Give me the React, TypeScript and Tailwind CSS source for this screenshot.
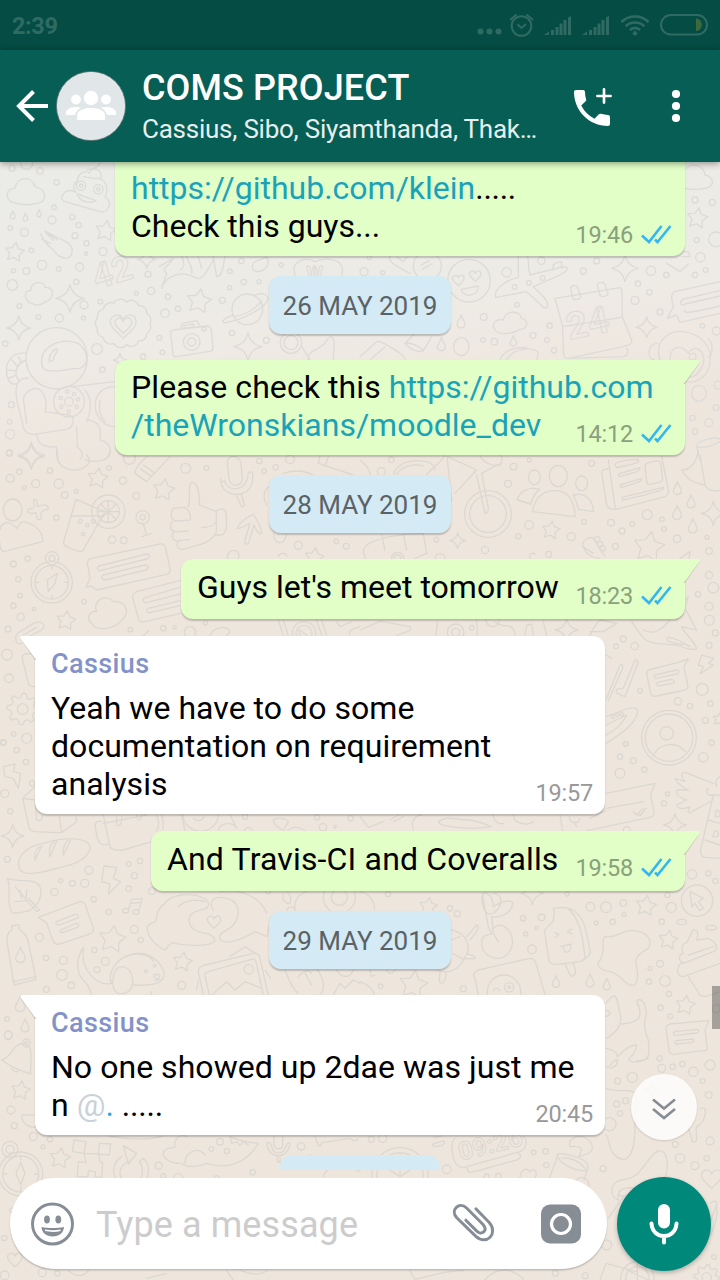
import React from "react";

type Pt = number[];
interface Sheet {
  x: number;
  y: number;
  circles?: Pt[];
  ellipses?: Pt[];
  stars?: Pt[];
  sparks?: Pt[];
  drops?: Pt[];
  hearts?: Pt[];
  gears?: Pt[];
  labels?: { t: string; x: number; y: number; size: number; rot: number }[];
  paths?: string[];
}

const starPath = (x: number, y: number, r: number) => {
  let d = "";
  for (let i = 0; i < 10; i++) {
    const a = -Math.PI / 2 + 0.15 + (i * Math.PI) / 5;
    const q = i % 2 ? r * 0.52 : r;
    d += `${i ? "L" : "M"}${(x + q * Math.cos(a)).toFixed(1)} ${(y + q * Math.sin(a)).toFixed(1)}`;
  }
  return d + "Z";
};
const sparkPath = (x: number, y: number, r: number) => {
  const k = r * 0.16;
  return `M${x} ${y - r}Q${x + k} ${y - k} ${x + r} ${y}Q${x + k} ${y + k} ${x} ${y + r}Q${x - k} ${y + k} ${x - r} ${y}Q${x - k} ${y - k} ${x} ${y - r}Z`;
};
const dropPath = (x: number, y: number, r: number) =>
  `M${x} ${y - r}C${x + r * 0.2} ${y - r * 0.4} ${x + r * 0.7} ${y} ${x + r * 0.6} ${y + r * 0.5}C${x + r * 0.4} ${y + r * 1.1} ${x - r * 0.5} ${y + r * 1.1} ${x - r * 0.6} ${y + r * 0.4}C${x - r * 0.6} ${y} ${x - r * 0.1} ${y - r * 0.4} ${x} ${y - r}Z`;
const heartPath = (x: number, y: number, r: number) =>
  `M${x} ${y + r}C${x - r * 0.5} ${y + r * 0.5} ${x - r * 1.2} ${y} ${x - r} ${y - r * 0.5}C${x - r * 0.7} ${y - r} ${x - r * 0.1} ${y - r * 0.9} ${x} ${y - r * 0.4}C${x + r * 0.2} ${y - r} ${x + r * 0.9} ${y - r} ${x + r} ${y - r * 0.4}C${x + r * 1.1} ${y + r * 0.1} ${x + r * 0.4} ${y + r * 0.6} ${x} ${y + r}Z`;
const scallop = (x: number, y: number, rx: number, ry: number, n: number) => {
  let d = "";
  for (let i = 0; i <= n; i++) {
    const a = (i * 2 * Math.PI) / n;
    const px = (x + rx * Math.cos(a)).toFixed(1);
    const py = (y + ry * Math.sin(a)).toFixed(1);
    d += i ? `A22 22 0 0 1 ${px} ${py}` : `M${px} ${py}`;
  }
  return d;
};
const gearPath = (x: number, y: number, r: number) => {
  let d = "";
  for (let i = 0; i < 32; i++) {
    const a = (i * Math.PI) / 16;
    const q = i % 4 < 2 ? r * 1.35 : r;
    d += `${i ? "L" : "M"}${(x + q * Math.cos(a)).toFixed(1)} ${(y + q * Math.sin(a)).toFixed(1)}`;
  }
  return d + "Z";
};

// Doodle sheets are drawn at three times their size on the page.
const SHEETS: Sheet[] = [
  {
    x: 0, y: 160,
    circles: [[36,25,9],[80,10,18],[120,33,10],[170,67,8],[162,142,7],[156,180,12],[217,171,8],[236,195,8],[31,204,7],[73,217,12],[225,227,9],[259,250,8],[258,281,5],[94,271,7],[309,275,12],[126,315,14],[40,332,6],[79,333,10],[176,327,7],[239,321,12],[229,366,8],[37,375,16],[58,438,7],[252,435,12],[301,425,7],[115,471,7],[178,474,12],[250,474,6],[16,551,8],[409,400,6],[444,343,9],[453,393,11],[504,410,8],[495,460,13],[534,446,8],[478,533,7],[487,577,7],[291,567,16],[307,629,8],[429,590,8],[667,421,9],[696,519,8],[799,541,9],[690,334,7],[724,303,8],[731,366,8],[689,383,6],[777,365,6],[844,315,6],[34,734,9],[29,785,7],[30,823,14],[28,878,9],[243,77,14],[295,88,14],[243,77,5],[295,88,5],[575,546,25],[575,546,12],[612,507,6],[742,448,46],[170,595,92],[207,725,46],[207,725,13],[202,695,5],[222,702,5],[234,718,5],[230,740,5],[206,755,5],[184,740,5],[182,714,5],[873,548,32],[873,548,21]],
    stars: [[44,277,30],[317,213,32],[597,424,38]],
    sparks: [[210,415,42],[56,504,36],[744,560,42],[94,885,40],[440,298,28],[360,600,20]],
    drops: [[38,165,12],[76,172,12],[117,160,11]],
    hearts: [[370,497,38],[370,495,25]],
    labels: [{ t: "42", x: 290, y: 388, size: 104, rot: -17 }, { t: "w", x: 918, y: 358, size: 70, rot: 0 }],
    paths: [
      "M40 128C15 120 15 85 45 85C50 50 95 45 105 80C140 85 145 128 110 130C90 136 60 134 40 128Z",
      "M232 62C200 90 250 105 215 92C190 88 175 120 195 125L300 155C335 160 335 115 315 112C325 90 320 60 300 58M232 62C235 35 260 30 268 40C280 15 300 30 303 45C310 55 300 60 250 50M262 28C280 30 300 20 302 0M232 102C240 130 275 130 288 122Z",
      "M122 222C135 240 120 235 160 270C180 300 215 305 217 270C215 250 190 240 170 232C150 222 130 208 135 215C150 235 160 235 160 242M125 237L150 250M145 222L172 240",
      "M95 430C70 420 70 390 92 392C92 365 130 360 135 382C165 380 165 420 135 425C125 438 105 438 95 430Z",
      scallop(370, 490, 80, 64, 13),
      "M512 520C510 515 515 512 520 510L620 498C628 498 632 500 634 508L639 565C638 572 635 573 630 574L530 590C522 592 520 588 519 582ZM540 508L548 490L590 482L600 498M551 497L580 492L582 500L553 505Z",
      "M700 465C660 480 660 495 690 485C740 475 820 430 800 408C795 400 780 400 765 405M700 470C740 465 775 440 785 422",
      "M125 610C120 560 180 530 235 550C265 575 270 610 240 625C200 625 190 635 160 632C135 635 125 625 125 610Z",
      "M148 605C145 585 160 565 172 568C175 580 160 580 160 600Z",
      "M85 655C40 650 45 700 55 740L70 800C75 825 100 825 120 820L200 808C225 800 225 765 205 765L135 755C145 720 130 685 105 685C80 690 65 710 72 730L80 790",
      "M75 580C35 575 15 610 20 640C22 665 35 675 50 672M55 590L65 610M35 600L52 618M22 630L45 632M25 655L48 645M78 600C50 610 40 640 55 660",
      "M110 820C110 850 130 865 170 860L175 900M230 800L232 860C250 875 250 890 240 900M265 780C295 785 305 800 300 840C340 850 340 890 310 900M215 680L345 665M255 690C280 720 270 760 260 785M345 680C310 680 285 700 285 740C290 780 320 800 345 800M300 720C295 750 300 770 315 785",
      "M478 320L520 295C500 330 480 320 500 340L485 385C495 350 540 330 580 350C610 370 620 330 640 300M540 330C560 320 550 300 545 290M575 340C580 320 565 310 560 290M605 325L595 290M640 290L650 350C665 350 670 320 675 290",
      "M760 330C745 300 790 300 800 290C810 310 800 335 770 335Z",
      "M885 345C870 300 920 290 945 305C975 290 1040 295 1025 345",
      "M905 560L930 600M990 530C1010 535 1000 560 1000 600M985 535C960 580 925 560 925 600",
    ],
  },
  {
    x: 360, y: 160,
    circles: [[1005,120,9],[1057,127,9],[1010,240,8],[1068,238,22],[1021,292,14],[1005,345,8],[1037,330,7],[919,345,8],[873,332,14],[710,303,9],[670,333,9],[544,302,11],[440,337,14],[834,371,8],[868,397,8],[825,421,12],[900,456,9],[464,381,7],[507,368,7],[548,354,7],[471,434,7],[371,471,10],[569,497,8],[519,526,9],[561,540,7],[582,571,8],[403,545,10],[369,540,7],[1027,497,7],[1069,513,12],[12,335,12],[68,338,6],[28,293,6],[998,774,8],[1046,788,12],[1005,815,8],[1068,743,9],[1075,675,12],[327,362,64],[202,318,42],[998,590,10]],
    ellipses: [[304,560,23,27],[1017,700,22,24]],
    stars: [[1012,175,32]],
    sparks: [[795,325,40],[860,502,32]],
    drops: [[303,485,20],[244,553,20],[460,543,16]],
    hearts: [[295,360,17],[346,347,17]],
    labels: [{ t: "24", x: 628, y: 540, size: 112, rot: -12 }],
    paths: [
      "M975 85C1000 90 1040 90 1055 75C1065 55 1040 45 1035 45C1030 10 990 10 980 25",
      "M303 388L355 378C355 410 310 415 303 388ZM183 315L208 302M186 328L215 312",
      "M90 290C85 300 90 310 150 340M110 290L130 305L140 292",
      "M475 290L475 352C440 360 400 385 407 412L500 395L552 443C570 445 562 425 555 415L520 380L600 345C635 325 625 315 590 325L510 345C500 310 510 290 500 290M580 330C575 310 590 305 605 305L605 325",
      "M585 415L780 383C790 385 785 400 787 470L815 540C820 555 800 555 790 560L625 595C612 597 610 585 610 570L608 500ZM608 500L785 472M625 595L790 590C805 585 807 575 800 565M608 500L585 415",
      "M632 385C630 377 650 374 652 380L662 410C664 418 640 422 638 414ZM712 377C710 368 730 364 734 372L744 400C746 410 722 412 720 405Z",
      "M1080 365L945 395C930 400 935 420 940 440L922 475L950 465L960 487L1080 460M968 418L1080 392M968 418C955 430 965 440 975 432L1080 408M975 450C970 460 980 462 1080 438M940 275L985 275L990 290L965 290M920 310L960 335L985 312",
      "M405 510C390 490 410 475 430 480C435 450 480 450 485 475C510 480 500 510 480 508C450 525 415 525 405 510Z",
      "M165 520L135 550C150 570 180 580 190 572L215 530M135 550C150 545 180 560 190 572M0 590L50 545C60 540 140 585 135 600M30 600L75 560",
      "M440 600C460 560 530 560 535 580L530 600M420 600C430 570 470 560 500 563",
      "M900 600C880 540 930 510 970 515C1020 520 1060 560 1050 610C1040 660 1000 670 980 665M893 550C860 550 860 600 885 600M1045 535C1065 560 1055 590 1045 590M930 600C930 560 960 550 985 580C1000 550 1040 570 1030 610C1020 640 1000 655 985 650",
      "M1010 860C1010 840 1080 825 1080 840M1010 860L1020 900M1010 860C1040 870 1070 850 1080 845",
    ],
  },
  {
    x: 0, y: 450,
    circles: [[31,85,12],[58,65,8],[28,10,9],[73,113,6],[107,101,12],[150,62,8],[176,101,14],[194,135,10],[229,124,6],[327,54,7],[369,92,11],[388,25,18],[409,138,10],[557,55,15],[619,54,7],[778,33,8],[792,64,7],[827,52,8],[870,28,13],[169,203,8],[336,269,11],[371,271,10],[40,342,9],[83,326,8],[55,388,8],[60,437,7],[40,467,8],[62,501,11],[102,477,5],[252,455,7],[24,537,9],[391,539,7],[490,535,8],[524,532,5],[21,614,16],[27,685,13],[616,518,6],[895,286,12],[1009,274,7],[1039,289,9],[700,318,17],[570,547,17],[41,852,7],[80,865,15],[10,877,8],[325,185,50],[325,185,33],[241,214,6],[281,214,6],[262,226,5],[249,252,5],[428,202,20],[428,202,8],[155,397,62],[155,397,50],[156,325,20],[156,325,9],[912,550,35],[912,550,24],[68,777,16]],
    ellipses: [[38,180,28,33]],
    stars: [[293,85,32],[491,120,34],[198,512,30],[943,323,30]],
    sparks: [[94,20,38]],
    gears: [[68,777,35]],
    paths: [
      "M0 240C5 215 25 215 35 222L50 235L65 215C110 220 130 250 128 275L10 305C0 300 0 290 0 280",
      "M100 150C105 145 112 148 112 170C135 160 145 165 145 178C125 182 118 185 125 205C115 213 110 210 108 188C85 195 80 185 85 178C105 175 105 170 100 150Z",
      "M228 148L315 185L250 300C245 307 235 306 200 290C190 285 190 280 192 270ZM215 198L305 198M325 152V218M292 185H358M302 162L348 208M348 162L302 208",
      "M430 222L440 255M425 260L455 250",
      "M565 170C575 140 560 110 575 97C595 95 600 140 598 165L650 185C650 180 672 170 677 185C682 220 680 250 665 255L645 255C620 285 590 285 550 298C530 300 525 280 540 270M650 185C645 210 655 240 645 255M520 175C510 190 510 210 530 213L570 210C575 195 565 180 555 172L520 175M517 215C505 235 515 245 530 245L565 243M520 248C510 265 525 275 540 272L570 268M605 233C630 232 645 225 648 215",
      "M682 40C680 10 720 15 723 40L727 85C727 110 692 115 687 85ZM662 85C658 95 670 100 674 90C680 130 740 125 744 75C742 65 760 60 758 75C765 150 665 150 662 90M710 137L722 165C725 172 735 170 732 162L725 132",
      "M712 235C720 210 750 200 758 193C775 210 785 240 785 250C775 255 765 235 762 225L745 280C735 285 733 280 735 270L750 220C735 225 720 240 712 235Z",
      "M142 390L172 370L165 400L145 425ZM155 350v8M155 436v8M108 397h8M194 397h8",
      "M275 325L480 282C490 280 495 285 497 295L510 355C512 365 508 370 500 373L290 420L275 408L258 412L270 385L262 340C262 330 268 327 275 325Z",
      "M297 348L440 312C452 312 450 325 440 327L300 362C290 360 290 350 297 348ZM310 375L435 345C447 345 447 357 437 360L315 390C303 388 303 378 310 375Z",
      "M540 392L410 425C398 430 395 440 400 450L415 505C418 515 425 518 435 515L540 490M540 412L435 443C425 448 430 460 440 458L540 432M540 452L445 475C438 480 440 490 450 488L540 467",
      "M275 520C255 505 270 480 290 485C275 450 320 430 340 455C375 450 390 485 370 505C345 540 290 545 275 520Z",
      "M75 565L125 540C140 525 125 510 105 518L60 545C40 555 45 590 65 580M70 555L110 532",
      "M510 20L440 95L405 70C405 60 410 45 440 20M420 55L455 80M430 45L465 70",
      "M170 0C165 50 200 60 230 60C260 55 280 35 260 15M255 30C300 40 330 30 330 0",
      "M105 610L75 612C68 615 65 620 68 630L85 700C90 710 95 710 105 710",
      "M835 510L850 557M850 510L865 557M950 510L965 557M965 510L980 557M897 540C897 560 910 570 925 562C920 550 912 555 905 543ZM630 557C640 530 680 525 690 545L680 557M1010 515L1020 530L1055 515M1050 555C1040 540 1065 535 1080 530",
      "M800 165C785 140 795 115 808 110M820 250C825 290 855 285 860 250M850 70C880 60 910 60 940 75M960 15L955 40L1060 75M985 20L975 48M835 320C840 305 860 310 860 318M430 557L445 542",
    ],
  },
  {
    x: 360, y: 450,
    circles: [[94,29,8],[64,65,12],[444,101,10],[461,50,10],[508,30,6],[695,40,9],[507,225,13],[475,259,8],[375,300,11],[634,260,12],[672,215,7],[753,218,10],[786,243,9],[817,222,7],[862,194,15],[906,208,7],[912,237,7],[951,266,11],[766,289,9],[566,313,9],[229,269,7],[1041,262,6],[1047,303,10],[1047,375,11],[1060,413,16],[1047,469,12],[1014,433,8],[1048,511,15],[1066,549,9],[1047,586,9],[790,567,9],[768,589,7],[824,588,11],[840,722,7],[1027,718,18],[954,754,11],[990,768,8],[1051,761,8],[1036,811,9],[1055,878,8],[797,881,7],[240,325,14],[384,192,70],[384,192,55],[113,325,18],[113,325,10],[712,268,8],[720,282,8],[728,295,8],[287,547,25],[287,547,12],[335,533,7],[398,510,20],[758,800,5],[772,795,5],[786,793,5],[927,863,82],[927,863,71],[920,850,20]],
    ellipses: [[523,82,18,22],[595,78,27,32],[665,100,18,22]],
    stars: [[573,241,28],[867,292,48],[1078,808,20]],
    sparks: [[1060,190,36],[293,272,24],[620,540,34]],
    drops: [[952,115,20],[993,155,20],[951,188,22],[998,228,22]],
    paths: [
      "M262 20L350 60L285 130M262 25L275 155M350 75L375 190C385 190 385 180 385 175L365 70L410 45C430 45 430 20 420 15M360 15C370 40 400 50 420 45M185 95C200 60 245 40 255 15M100 75C110 40 150 25 200 35C215 40 225 50 225 60M110 75C120 50 160 40 190 48M0 30C20 45 30 60 30 75",
      "M517 185C525 140 555 120 585 122C625 120 645 155 645 200ZM472 150C480 120 510 110 540 118C520 130 515 150 512 162ZM640 135C680 125 700 155 700 185L655 178C652 160 645 145 640 135Z",
      "M745 30L765 170C765 180 775 178 780 175L915 140C925 135 928 130 925 120L905 20M745 55L730 60C722 62 725 70 727 80L740 165C745 180 765 178 765 178M765 45C765 35 790 30 835 28C840 38 830 40 770 53ZM775 72L840 53C842 62 838 65 778 80ZM780 105L842 86C850 90 846 95 782 113ZM785 142L910 112C918 115 914 122 788 150ZM855 48C855 40 860 38 895 32C902 32 902 38 908 88C908 95 905 97 868 103C862 103 860 100 860 95Z",
      "M965 60C990 60 1010 40 1015 0M965 60C985 95 1010 100 1035 105L1020 15M1035 105C1045 125 1070 125 1080 120",
      "M668 290C665 265 695 260 700 265L735 320M670 290C680 320 710 325 720 325M668 290L700 310",
      "M15 325L10 300C15 280 60 255 190 250L200 310L165 325M65 255L75 300M130 252L140 300M510 325C505 315 520 305 525 312",
      "M228 557L232 515M348 510C352 515 352 557 352 557M405 515C430 540 460 510 465 557M495 557L500 525L515 522L520 557M550 515L560 557M690 557C700 530 720 510 720 510L770 520L730 545L690 545M0 540C50 520 60 510 70 515L150 530C160 545 130 545 110 557",
      "M815 515C860 580 850 580 950 585C960 590 1010 605 1010 595C1000 570 970 545 965 530L1010 540L975 475L985 440C970 460 950 465 960 490L950 510M970 585L925 575C910 555 940 560 990 590M850 540C880 555 900 545 930 510M960 325L990 305L985 335L965 380",
      "M738 750L780 645C785 640 790 645 788 655L745 752M825 630C835 628 835 640 830 648L795 740L770 730C765 715 780 715 790 715Z",
      "M865 660C858 665 860 675 862 680L872 730C875 740 880 740 890 738L975 720C985 715 985 710 983 705L972 650L985 627L955 637Z",
      "M885 675L950 660C960 662 958 670 950 672L888 685C880 682 880 678 885 675ZM892 697L935 688C945 690 945 698 937 700L895 708C888 705 888 700 892 697Z",
      "M1025 615L1062 625L1045 640L1060 645L1020 672L1030 650L1015 645Z",
      "M738 800L780 785C810 770 835 770 833 785C830 820 780 855 738 880M738 825L800 795C790 820 760 845 738 855M738 615L755 625",
      "M880 920C890 880 950 870 975 905",
    ],
  },
  {
    x: 0, y: 740,
    circles: [[10,8,8],[50,30,8],[78,66,8],[14,161,12],[31,214,8],[22,358,9],[267,391,12],[182,422,6],[217,430,9],[254,430,12],[163,456,11],[281,478,8],[326,516,8],[386,372,7],[420,363,8],[403,407,9],[386,446,8],[456,453,10],[118,592,12],[138,654,8],[190,661,12],[186,705,16],[139,748,9],[214,736,10],[283,630,8],[316,664,12],[291,689,9],[403,568,12],[422,600,8],[545,736,12],[735,230,8],[951,232,8],[969,262,11],[1005,260,4],[1052,235,8],[745,275,12],[805,455,7],[21,837,7],[25,885,12],[96,130,8],[602,220,54],[1018,472,48],[1018,472,24],[438,694,4],[464,677,4],[746,688,14]],
    ellipses: [[377,512,9,7],[408,516,9,7]],
    stars: [[337,598,42],[548,666,30]],
    sparks: [[38,288,34]],
    drops: [[61,645,24],[60,792,24],[75,857,20]],
    hearts: [[642,545,20],[471,710,9]],
    paths: [
      "M10 80L45 72L40 95L62 100L55 145L40 115L15 110ZM312 378L350 382L340 415L362 425L325 463L330 432L305 425Z",
      "M68 175L88 265C90 275 95 275 185 278L178 230M68 175L105 140M68 175L105 180M185 278L230 245L228 230M105 185L110 240C120 245 128 240 128 225",
      "M60 390C45 360 70 320 130 310C190 290 270 290 270 325C260 370 190 380 150 390C110 402 70 405 60 390M105 360C100 330 115 325 120 320M150 350C145 320 155 310 165 302M190 345C185 320 200 305 205 298M105 360L125 318M150 350L172 300M190 345L212 300",
      "M305 245C280 240 285 260 290 285C295 315 310 318 325 312M310 225L330 320C335 330 350 332 370 330L455 305M310 250L440 225M350 232V255C360 260 365 255 365 230M410 225C410 245 425 245 425 225M470 225C480 250 475 265 470 273M485 225C490 240 492 250 488 268",
      "M580 235C590 245 605 245 612 230M545 225L555 273M655 273C660 245 700 245 710 265L690 225M820 240C830 230 860 235 865 245C860 260 850 262 850 273M820 240C820 260 840 262 845 270M865 270C880 255 910 265 915 273",
      "M22 415C60 430 100 410 120 440C130 470 110 510 75 515C50 520 30 525 30 500C20 480 35 440 22 415ZM45 440L110 515L118 510L85 475M60 450L65 475M80 450L78 480M45 485L80 482",
      "M115 532L240 485C250 483 255 490 258 500L280 565C282 575 275 580 270 582L175 613C165 613 160 608 158 600L140 548ZM170 545L225 523C238 522 238 532 230 535L178 555C168 555 165 548 170 545ZM182 570L228 550C240 550 238 560 230 563L188 578C180 578 178 572 182 570Z",
      "M385 510L395 478L427 475L415 515M392 490L423 487",
      "M495 490C520 450 620 460 625 490C630 520 570 500 567 540C570 590 640 570 645 600C640 620 560 620 515 608L495 630C470 620 440 590 442 560C450 545 470 550 468 540C470 520 480 500 495 490M640 510C620 480 650 470 670 473C720 480 725 520 700 555C685 575 660 570 658 595C665 610 700 615 765 575L800 590C810 570 800 560 810 555M660 455C720 445 780 470 800 520M535 500C560 475 600 480 615 485",
      "M885 510C880 480 900 460 920 455M850 460C845 480 860 495 870 490C875 475 870 460 862 458M860 510C870 495 880 500 885 512",
      "M35 570L35 558L57 554L58 570C80 580 85 600 88 620L108 718L42 735L22 610C18 590 25 575 35 570ZM42 725L108 710",
      "M250 622C225 660 230 700 250 720C270 740 270 750 275 765M250 622C240 690 290 740 335 730M335 730C320 700 350 655 390 645C430 630 470 650 490 690C500 720 480 740 400 735M360 680C335 690 330 750 355 760C380 765 395 750 398 730C398 700 390 680 360 680M400 643C430 640 455 650 460 665M452 755L455 765M462 722L480 718",
      "M610 765L595 695C595 680 605 678 615 675L760 640C772 638 778 645 780 655L805 765M628 765L615 708C613 700 618 697 625 695L755 658C765 656 767 660 768 665L790 765M635 765L680 725L705 750L735 725L785 745M690 650L735 620L765 640M595 720L590 750M795 690L812 715",
      "M855 690C870 730 880 750 895 760M950 685C975 720 975 750 960 765M895 710C910 690 930 690 935 700M915 700L935 735M1000 765L1020 730L1035 745L1060 720L1080 730M1010 690C1020 710 1050 720 1060 690",
    ],
  },
  {
    x: 360, y: 740,
    circles: [[797,12,7],[780,50,8],[820,62,9],[853,89,8],[780,100,15],[922,162,6],[912,190,8],[1030,52,14],[996,403,14],[1045,400,8],[1066,423,8],[922,465,8],[934,502,15],[905,545,8],[790,489,10],[738,502,16],[691,500,13],[792,523,6],[758,545,8],[709,549,6],[621,462,6],[545,532,10],[530,564,5],[489,535,8],[497,582,6],[516,628,13],[270,505,8],[292,521,9],[84,462,8],[900,671,10],[870,685,6],[867,725,8],[915,723,16],[927,762,8],[902,803,8],[931,829,7],[310,746,9],[62,739,7],[800,270,10],[1069,806,12],[1011,482,47],[432,755,50],[447,742,14],[447,742,4],[740,820,9]],
    ellipses: [[965,546,14,8],[1053,563,16,7]],
    stars: [[858,498,32],[925,600,30],[976,796,30],[205,500,28],[160,735,44]],
    sparks: [[945,255,34],[517,460,34]],
    drops: [[588,725,18],[690,722,20],[740,733,18]],
    paths: [
      "M738 160L885 130L872 165L882 215C882 225 880 230 870 232L680 272M738 205L850 185M690 235L738 212M600 225L608 273M820 215L830 225L850 205M835 222L840 228L858 205M628 230C630 255 660 250 660 235M645 248L650 260",
      "M1060 130L975 97C960 100 965 110 975 125L945 115C950 130 980 150 985 150L950 150C945 160 960 175 980 180L950 195C950 205 970 210 990 200C980 215 985 220 990 218L1060 180M1080 110C1060 120 1070 135 1070 140M1045 145C1035 155 1045 170 1055 165L1080 165M1060 165L1022 330C1020 345 1025 350 1035 352L1080 355M1045 240L1080 250M1035 300L1080 315M1070 210C1085 215 1085 235 1065 230ZM1065 272C1080 277 1080 293 1058 290Z",
      "M0 230L25 262L70 245M90 240L115 225M100 245L130 230M235 245C260 225 290 240 330 240C360 245 380 255 395 260L340 265C300 265 240 260 235 245M400 225C400 245 420 255 430 250M460 225C460 250 500 260 520 245M160 270C150 240 170 225 185 225",
      "M990 455L1030 475L1015 485L1030 505L1018 512L1005 490L995 500Z",
      "M385 560C375 500 370 490 368 460C395 455 400 490 400 500M368 460C360 500 380 530 395 520M400 460C430 460 430 500 400 520M400 500C430 480 460 480 458 490C455 520 420 535 395 530M395 530L400 580L415 605M385 560C400 595 400 575 370 590C355 620 375 655 415 655C460 650 470 590 440 565C425 550 405 555 398 570",
      "M580 505C640 495 660 520 675 560L690 630C695 645 680 655 660 665L590 673C570 675 567 665 565 650L553 570C575 555 565 550 580 545C575 530 590 530 580 505M620 503C660 530 670 600 675 655M615 670L630 705C640 715 650 700 645 690L640 667M583 577L597 583L585 592M635 567L622 575L637 582M600 620L635 612M610 620C610 645 635 640 632 615",
      "M735 590C770 595 780 575 810 572C860 570 880 600 865 625C840 640 820 650 830 680C835 710 835 735 815 737C790 730 780 700 750 695C720 690 705 675 720 660C740 630 720 600 735 590Z",
      "M980 608L1000 568C1015 570 1015 580 1010 600L1045 595C1075 610 1075 630 1060 635L970 670C955 665 955 640 970 640C960 620 970 610 980 608M970 665C945 680 950 710 970 710L1080 670M985 710L1020 765C1030 772 1040 770 1080 755M985 645L1060 620",
      "M275 570C320 580 340 620 310 660C290 700 250 700 230 690M320 590L350 555C360 560 355 570 330 600M320 640L345 650C350 660 330 655 310 655M240 695L238 725C245 735 258 730 258 695M275 600L300 590M278 640L305 655M30 690L35 710L45 705M80 690C85 705 100 700 105 690M0 455C25 460 45 480 43 510M0 725C25 735 40 750 43 765",
      "M345 715C335 700 345 695 355 690L510 655C520 655 525 660 528 670L555 765M345 715L355 765M400 752C405 742 415 742 420 752",
      "M738 790C745 780 755 765 765 768C775 780 775 800 780 820C790 850 770 880 738 895M785 852C820 850 840 840 840 820C840 790 825 785 832 780C850 775 860 800 858 825C850 850 855 880 865 900",
    ],
  },
  {
    x: 0, y: 1000,
    circles: [[25,106,12],[33,330,12],[43,377,9],[100,410,12],[129,440,6],[150,418,8],[476,497,11],[660,425,10],[634,447,7],[681,453,8],[758,517,8],[903,439,11],[490,528,7],[535,535,14],[13,714,8],[14,826,13],[127,818,12],[172,820,8],[650,535,8],[35,630,6],[79,129,12],[79,129,5],[62,522,66],[62,522,54],[30,448,24],[30,448,12]],
    stars: [[62,272,30],[180,475,32]],
    hearts: [[45,778,22]],
    paths: [
      "M5 180C40 170 35 130 70 132C105 135 90 180 92 222C70 215 30 200 5 180ZM35 205C40 215 55 220 55 210M105 345L65 345C65 370 85 382 105 382",
      "M48 520L62 487L75 520L62 555ZM62 470v10M62 562v10M12 522h8M105 522h8",
      "M222 420L258 425L252 460L217 455ZM298 430L332 432L328 465L295 462ZM252 460L295 462L300 485L308 490L305 532L285 530L286 515L265 512L264 530L232 530L235 485L258 488Z",
      "M365 470C335 490 335 525 355 545M385 485C360 495 355 520 365 535M370 437L410 460L385 492ZM430 475C455 500 445 530 435 545M430 475L418 485C430 500 430 525 420 535",
      "M540 490C500 490 480 465 495 450C510 440 530 445 525 440C520 410 550 400 560 410M545 490C560 505 600 500 620 490C680 510 740 490 775 430C740 425 720 425 690 410M555 490C555 450 600 440 615 465M690 410L695 430L710 425L720 437L730 425L745 435M325 408C400 420 450 420 490 408",
      "M800 430C805 480 865 480 870 430C860 425 858 440 855 445C845 465 820 465 815 440C812 425 800 425 800 430M822 408V435C825 450 848 450 848 435V408M832 470V485L840 488V470M945 410L955 437C960 440 965 435 965 428L1050 415C1060 425 1070 425 1075 415",
      "M205 812C240 840 260 820 265 812M440 835L500 820M680 812L700 840M720 810C760 830 790 820 800 812M970 530C975 500 1030 490 1080 515M930 465L945 470",
    ],
  },
  {
    x: 360, y: 1000,
    circles: [[899,175,8],[817,232,15],[773,243,9],[905,205,12],[938,200,8],[967,192,8],[1000,215,14],[1050,195,15],[1028,243,7],[1046,285,10],[748,373,20],[770,312,9],[797,302,9],[780,340,8],[946,433,9],[960,475,14],[1005,497,12],[1040,475,8],[1050,423,12],[729,506,9],[521,457,7],[557,454,8],[559,495,8],[260,508,13],[34,418,9],[68,415,12],[740,735,15],[586,820,9],[676,827,9],[1062,771,7],[380,530,8],[415,528,8],[665,555,22],[120,528,85],[120,528,70],[1040,832,14],[832,835,50],[832,835,35]],
    hearts: [[1055,535,30]],
    gears: [[1040,832,28]],
    sparks: [[875,270,20]],
    labels: [{ t: "09:26", x: 302, y: 482, size: 76, rot: -14 }],
    paths: [
      "M865 120C870 160 870 185 830 182M738 145C755 150 770 150 772 170C780 165 800 135 830 135C830 160 810 170 805 180C830 195 845 180 865 175M738 200C755 210 750 180 772 180C775 195 760 205 750 205",
      "M930 72L1047 62L1035 90L1042 145C1040 155 1035 152 1030 152L940 163C930 163 928 158 927 150L918 85C918 75 925 73 930 72ZM945 95L1010 88C1018 88 1018 98 1010 99L947 106C938 106 938 97 945 95ZM950 122L995 117C1003 117 1003 126 995 128L952 132C942 132 942 124 950 122Z",
      "M738 265C780 280 790 265 820 275C840 300 825 340 825 380C825 430 815 480 790 478C740 470 750 410 738 405",
      "M985 345L1000 345M1020 330C1030 315 1040 330 1035 345C1030 375 1010 375 1008 385L1010 420C1005 430 995 430 995 415L985 385",
      "M285 415C270 430 275 450 280 470C285 500 300 505 320 500L480 455C500 445 505 425 490 408M320 500L325 515C335 520 340 515 470 480C485 475 485 465 475 460M220 432L250 422C258 425 252 435 245 436L225 440C215 438 215 435 220 432ZM220 412L245 408",
      "M630 440C620 420 650 405 665 410C700 420 705 450 685 460C665 465 650 480 660 460C670 450 665 435 630 440",
      "M592 463C600 455 650 470 670 480C690 495 685 510 675 512C640 512 595 490 592 463ZM605 475C630 470 660 485 675 505M592 470L568 535M682 508L672 540M480 535C480 510 500 500 510 515C520 500 535 515 525 535",
      "M775 600C745 590 750 545 785 540C850 535 850 480 895 452C925 450 930 500 910 550M775 595C770 565 800 560 830 565C815 590 790 590 775 585",
      "M745 655L790 590M1050 610C1080 590 1070 620 1060 640L1045 690M1040 720C1060 700 1075 650 1070 620M720 840L738 790L830 815M832 785V840M800 810L865 840",
      "M375 840C390 820 420 805 450 812C480 825 490 835 490 840M150 812L165 840M165 838L240 820C280 812 300 812 310 812M60 490L120 530L180 490M120 460V530",
    ],
  },
];

function Wallpaper() {
  return (
    <svg className="absolute inset-0 h-full w-full" viewBox="0 0 720 1280" fill="none" aria-hidden="true">
      <defs>
        <linearGradient id="wall" x1="0" y1="160" x2="40" y2="470" gradientUnits="userSpaceOnUse">
          <stop offset="0" stopColor="#ebebe8" />
          <stop offset="0.6" stopColor="#eeebe6" />
          <stop offset="1" stopColor="#eee6dd" />
        </linearGradient>
      </defs>
      <rect width="720" height="1280" fill="url(#wall)" />
      {SHEETS.map((s) => (
        <g
          key={`${s.x}-${s.y}`}
          transform={`translate(${s.x} ${s.y}) scale(0.33333)`}
          stroke={s.y < 200 ? "#dddbd7" : "#dcd8d1"}
          strokeWidth="4"
          strokeLinecap="round"
          strokeLinejoin="round"
        >
          {s.circles?.map(([x, y, r], i) => <circle key={i} cx={x} cy={y} r={r} />)}
          {s.ellipses?.map(([x, y, a, b], i) => <ellipse key={i} cx={x} cy={y} rx={a} ry={b} />)}
          {s.stars?.map(([x, y, r], i) => <path key={i} d={starPath(x, y, r)} />)}
          {s.sparks?.map(([x, y, r], i) => <path key={i} d={sparkPath(x, y, r)} />)}
          {s.drops?.map(([x, y, r], i) => <path key={i} d={dropPath(x, y, r)} />)}
          {s.hearts?.map(([x, y, r], i) => <path key={i} d={heartPath(x, y, r)} />)}
          {s.gears?.map(([x, y, r], i) => <path key={i} d={gearPath(x, y, r)} />)}
          {s.paths?.map((d, i) => <path key={i} d={d} />)}
          {s.labels?.map((l) => (
            <text
              key={l.t}
              x={l.x}
              y={l.y}
              fontSize={l.size}
              strokeWidth="3"
              transform={`rotate(${l.rot} ${l.x} ${l.y})`}
              className="font-['Roboto',sans-serif] font-bold"
            >
              {l.t}
            </text>
          ))}
        </g>
      ))}
    </svg>
  );
}

function SignalIcon() {
  return (
    <svg className="h-[21px] w-[28px]" viewBox="0 0 28 21" fill="#2f6b63">
      <path d="M0 20L5 16.500V20ZM7 15h3v5H7zM11.500 12h3v8h-3zM15.500 8.500h3V20h-3zM19.500 5h3v15h-3zM24 2.500L27 1V20H24z" />
    </svg>
  );
}

function StatusBar() {
  return (
    <div className="flex h-[50px] shrink-0 items-center justify-between bg-[#054d44] pr-[12px] pl-[12px] text-[#2f6b63]">
      <span className="pt-[4px] text-[23.500px] font-bold tracking-[-0.4px]">2:39</span>
      <div className="flex items-center">
        <svg className="mt-[12px] mr-[7px] h-[7px] w-[25px]" viewBox="0 0 25 7" fill="currentColor">
          <circle cx="3.500" cy="3.500" r="3" />
          <circle cx="12.500" cy="3.500" r="3" />
          <circle cx="21.500" cy="3.500" r="3" />
        </svg>
        <svg className="mr-[10px] h-[24px] w-[25px]" viewBox="0 0 25 24" fill="none" stroke="currentColor" strokeWidth="2">
          <circle cx="12.500" cy="13" r="9.800" />
          <path d="M8.500 11.500L12.500 15L17 11M1 7L7.500 1.500M24 7L17.500 1.500" />
        </svg>
        <SignalIcon />
        <div className="w-[10px]" />
        <SignalIcon />
        <svg className="mr-[10px] ml-[10px] h-[22px] w-[30px]" viewBox="0 0 30 22" fill="none" stroke="currentColor" strokeWidth="2.600">
          <path d="M1.500 8C9 .6 21 .6 28.500 8M5.700 12.200C11 7.300 19 7.300 24.300 12.200M10 16C13 13.400 17 13.400 20 16" />
          <circle cx="15" cy="19.300" r="2.200" fill="currentColor" stroke="none" />
        </svg>
        <svg className="h-[22px] w-[48px]" viewBox="0 0 48 22" fill="none">
          <rect x="1" y="1" width="46" height="19.500" rx="9.700" stroke="currentColor" strokeWidth="2" />
          <path d="M36 4.500h1a6.500 6.500 0 0 1 0 12.500h-1z" fill="#3f693c" />
        </svg>
      </div>
    </div>
  );
}

function Header() {
  return (
    <header className="relative z-10 flex h-[112px] shrink-0 items-center bg-[#075e54] pl-[16px] text-white shadow-[0_1px_7px_rgba(0,0,0,0.45)]">
      <svg className="h-[32px] w-[32px]" viewBox="0 0 32 32" fill="none" stroke="white" strokeWidth="4">
        <path d="M32 16H4M17.500 1.500L3 16L17.500 30.500" />
      </svg>
      <svg className="ml-[8px] h-[70px] w-[70px]" viewBox="0 0 70 70" fill="white">
        <circle cx="35" cy="35" r="34.600" fill="#e1e6e9" stroke="#536f6c" strokeWidth="0.800" />
        <circle cx="35" cy="27" r="7.200" />
        <circle cx="20" cy="28.500" r="4.900" />
        <circle cx="50" cy="28.500" r="4.900" />
        <path d="M21 49V44.500C21 39.500 28 37 35 37S49 39.500 49 44.500V49Z" />
        <path d="M10 44V41.500C10 38 15 36 20 36C22 36 23.500 36.300 25 36.800C21.500 38.600 19.500 41 19 44ZM60 44V41.500C60 38 55 36 50 36C48 36 46.500 36.300 45 36.800C48.500 38.600 50.500 41 51 44Z" />
      </svg>
      <div className="ml-[16px] flex w-[420px] flex-col pt-[2px] whitespace-nowrap">
        <span className="text-[36px] leading-[44px] font-medium tracking-[0.1px]">COMS PROJECT</span>
        <span className="text-[26px] leading-[38px] tracking-[-0.24px] text-[#e6efee]">Cassius, Sibo, Siyamthanda, Thak…</span>
      </div>
      <svg className="mt-[4px] ml-[6px] h-[48px] w-[48px]" viewBox="0 0 24 24" fill="white">
        <path d="M20 15.500c-1.250 0-2.450-.2-3.570-.57a1.020 1.020 0 0 0-1.020.24l-2.200 2.200a15.045 15.045 0 0 1-6.590-6.590l2.200-2.210a.96.96 0 0 0 .25-1A11.360 11.360 0 0 1 8.500 4c0-.55-.45-1-1-1H4c-.55 0-1 .45-1 1 0 9.390 7.610 17 17 17 .55 0 1-.45 1-1v-3.500c0-.55-.45-1-1-1z" />
        <path d="M14.700 6H21.300M18 2.700V9.300" stroke="white" strokeWidth="1.350" strokeLinecap="round" />
      </svg>
      <svg className="ml-[55px] h-[34px] w-[10px]" viewBox="0 0 10 34" fill="white">
        <circle cx="5" cy="5" r="4.100" />
        <circle cx="5" cy="17" r="4.100" />
        <circle cx="5" cy="29" r="4.100" />
      </svg>
    </header>
  );
}

function Ticks() {
  return (
    <svg className="h-[20px] w-[31px]" viewBox="0 0 31 20" fill="none" stroke="#34b7f1" strokeWidth="2.600">
      <path d="M1 11.500L8 18L20.500 2M14 15.500L16.500 18L29.500 2" />
    </svg>
  );
}

interface BubbleProps {
  out?: boolean;
  tail?: boolean;
  single?: boolean;
  time: string;
  author?: string;
  className: string;
  children: React.ReactNode;
}

function Bubble({ out, tail = true, single, time, author, className, children }: BubbleProps) {
  return (
    <div
      className={`relative shrink-0 pl-[16px] text-[32px] leading-[38px] whitespace-nowrap text-black shadow-[0_1.500px_1.500px_rgba(0,0,0,0.2)] ${
        out
          ? "mr-[35px] self-end rounded-[12px] bg-[#e1ffc7]"
          : "ml-[35px] w-[570px] self-start rounded-[12px] bg-white"
      } ${tail ? (out ? "rounded-tr-none" : "rounded-tl-none") : "rounded-t-none"} ${className}`}
    >
      {tail && (
        <svg
          className={`absolute top-0 h-[25px] w-[17px] ${out ? "left-full -ml-[1px]" : "right-full -mr-[1px] -scale-x-100"}`}
          viewBox="0 0 17 25"
        >
          <path d="M0 3H15.500L1 24H0Z" fill="rgba(0,0,0,0.18)" />
          <path d="M0 0H14C15.500 0 16 1.500 15.200 3L1 22.500H0Z" fill={out ? "#e1ffc7" : "white"} />
        </svg>
      )}
      {author && <div className="pt-[9px] pb-[6px] text-[27px] font-medium tracking-[0.4px] text-[#8393ca]">{author}</div>}
      {children}
      <div
        className={`absolute flex items-center gap-[8px] text-[23.500px] leading-[32px] tracking-[-0.2px] ${single ? "bottom-[8px]" : "bottom-[6px]"} ${
          out ? "right-[13px] text-[#8ba07c]" : "right-[12px] text-[#999999]"
        }`}
      >
        <span className="relative top-[1px]">{time}</span>
        {out && <Ticks />}
      </div>
    </div>
  );
}

function DateChip({ className, children }: { className: string; children: React.ReactNode }) {
  return (
    <div
      className={`flex h-[58px] w-[182px] shrink-0 items-center justify-center self-center rounded-[12px] bg-[#d4eaf4] pt-[2px] text-[26px] whitespace-nowrap text-[#5b6266] shadow-[0_1.500px_1.500px_rgba(0,0,0,0.2)] ${className}`}
    >
      {children}
    </div>
  );
}

function Composer() {
  return (
    <footer className="relative flex h-[110px] shrink-0 items-start gap-[10px] pl-[10px]">
      <div className="mt-[8px] flex h-[91px] w-[597px] items-center rounded-full bg-white pl-[21px] shadow-[0_1.500px_1.500px_rgba(0,0,0,0.2)]">
        <svg className="h-[44px] w-[44px]" viewBox="0 0 44 44" fill="none">
          <circle cx="21.500" cy="22" r="20" stroke="#868d94" strokeWidth="2.900" />
          <ellipse cx="16" cy="17.500" rx="2.900" ry="3.900" fill="#868d94" />
          <ellipse cx="27.300" cy="17.500" rx="2.900" ry="3.900" fill="#868d94" />
          <path d="M10.500 25C17 26.300 26 26.300 33 25C32.500 31 28 34.500 21.700 34.500S11 31 10.500 25Z" fill="#868d94" />
          <path d="M14 28.300C19 29.300 25 29.300 29.500 28.300" stroke="white" strokeWidth="1.600" />
        </svg>
        <span className="ml-[21px] w-[355px] pt-[2px] text-[36px] tracking-[0.1px] whitespace-nowrap text-[#cccccc]">Type a message</span>
        <svg className="h-[42px] w-[44px]" viewBox="0 0 46 44" fill="none" stroke="#868d94" strokeWidth="3.100" strokeLinecap="round">
          <path d="M26 6L40 20.500C50 32 37 45 26 35L6 15.500C-1.500 7 9 -1.500 16 5L33.500 22.500C39 29 32 34.500 27 29.500L15.500 18" />
        </svg>
        <svg className="ml-[45px] h-[40px] w-[42px]" viewBox="0 0 42 40" fill="none">
          <rect x="1" y="0.500" width="40" height="39" rx="9" fill="#868d94" />
          <circle cx="21" cy="20" r="9.500" stroke="white" strokeWidth="3.200" />
        </svg>
      </div>
      <div className="mt-[7px] flex h-[94px] w-[94px] items-center justify-center rounded-full bg-[#00897b] shadow-[0_2px_4px_rgba(0,0,0,0.25)]">
        <svg className="h-[44px] w-[32px]" viewBox="0 0 32 44" fill="none" stroke="white" strokeWidth="4" strokeLinecap="round">
          <rect x="10" y="2" width="12" height="24.500" rx="6" fill="white" stroke="none" />
          <path d="M3.500 21.500C4 30 10 34 16 34S28 30 28.500 21.500M16 34V40.500" />
        </svg>
      </div>
    </footer>
  );
}

export default function App() {
  return (
    <div className="relative flex h-[1280px] w-[720px] flex-col overflow-hidden font-['Roboto',sans-serif]">
      <Wallpaper />
      <div className="relative z-10">
        <StatusBar />
        <Header />
      </div>
      <main className="relative flex h-[1008px] shrink-0 flex-col overflow-hidden">
        <Bubble out tail={false} time="19:46" className="h-[94px] w-[570px] pt-[7px]">
          <div><span className="text-[#1aa3b8]">https://github.com/klein</span><span className="tracking-[-0.3px]">.....</span></div>
          <div>Check this guys...</div>
        </Bubble>
        <DateChip className="mt-[20px]">26 MAY 2019</DateChip>
        <Bubble out time="14:12" className="mt-[26px] h-[95px] w-[570px] pt-[8px]">
          <div><span className="tracking-[0.08px]">Please check this </span><span className="text-[#1aa3b8]">https://github.com</span></div>
          <div className="text-[#1aa3b8]">/theWronskians/moodle_dev</div>
        </Bubble>
        <DateChip className="mt-[20px]">28 MAY 2019</DateChip>
        <Bubble out single time="18:23" className="mt-[26px] h-[60px] w-[504px] pt-[9px]">Guys let's meet tomorrow</Bubble>
        <Bubble time="19:57" author="Cassius" className="mt-[17px] h-[178px] tracking-[0.04px]">
          <div>Yeah we have to do some</div>
          <div>documentation on requirement</div>
          <div>analysis</div>
        </Bubble>
        <Bubble out single time="19:58" className="mt-[17px] h-[60px] w-[534px] pt-[9px] tracking-[0.16px]">And Travis-CI and Coveralls</Bubble>
        <DateChip className="mt-[20px]">29 MAY 2019</DateChip>
        <Bubble time="20:45" author="Cassius" className="mt-[26px] h-[140px] tracking-[0.04px]">
          <div>No one showed up 2dae was just me</div>
          <div>n <span className="text-[#c8d2d8]">@</span><span className="text-[#2fa8e8]">.</span><span className="tracking-[-0.2px]"> .....</span></div>
        </Bubble>
        <div className="mt-[20px] h-[58px] w-[160px] shrink-0 self-center rounded-[12px] bg-[#d4eaf4]" />
        <div className="absolute top-[824px] right-0 h-[43px] w-[8px] bg-black/30" />
        <div className="absolute top-[912px] right-[23px] flex h-[66px] w-[66px] items-center justify-center rounded-full bg-white/80 shadow-[0_1px_2px_rgba(0,0,0,0.15)]">
          <svg className="mt-[4px] h-[22px] w-[24px]" viewBox="0 0 24 22" fill="none" stroke="#868d94" strokeWidth="2.600">
            <path d="M1 1.500L12 10.500L23 1.500M1 11L12 20L23 11" />
          </svg>
        </div>
      </main>
      <Composer />
    </div>
  );
}
